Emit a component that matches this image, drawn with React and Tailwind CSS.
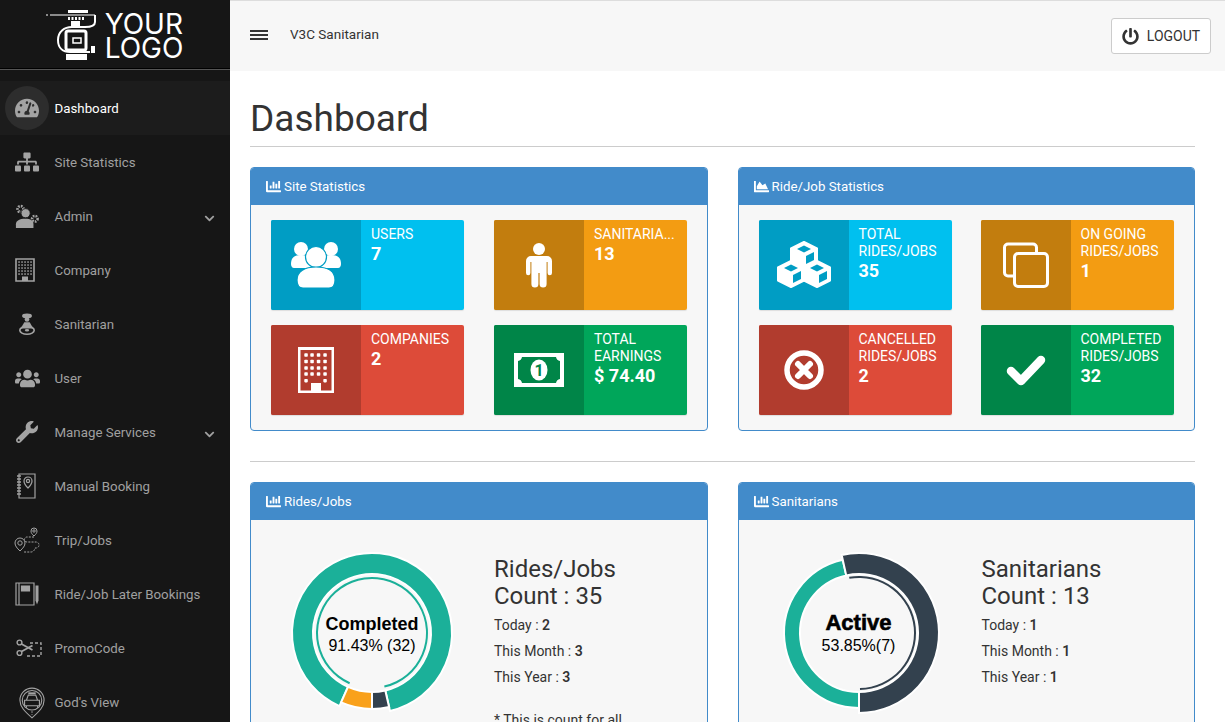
import {
  FaTachometerAlt, FaSitemap, FaUsers, FaWrench, FaChevronDown, FaChartBar, FaChartArea, FaPowerOff,
} from "react-icons/fa";

const FONT = "font-['Roboto',sans-serif]";

// ---- sidebar drawings ----

function AdminIcon() {
  return (
    <svg viewBox="0 0 26 26" className="w-[24px] h-[24px]" fill="currentColor">
      <circle cx="6" cy="5.500" r="3.200" fill="none" stroke="currentColor" strokeWidth="3" strokeDasharray="1.800 1.200" />
      <circle cx="21.500" cy="16" r="3" fill="none" stroke="currentColor" strokeWidth="2.800" strokeDasharray="1.800 1.100" />
      <circle cx="11.500" cy="10" r="5" stroke="#161616" strokeWidth="1" />
      <path d="M1 26v-4c0-4 4-6 10-6s9 2 9 6v4z" />
    </svg>
  );
}

function CompanyIcon() {
  return (
    <svg viewBox="0 0 20 24" className="w-[20px] h-[24px] -translate-x-[2px]" fill="currentColor">
      <path d="M1 1h18v22H1z" fill="none" stroke="currentColor" strokeWidth="1.600" />
      {[4, 7, 10, 13, 16].map((y) =>
        [4, 7, 10, 13, 16].map((x) => <rect key={`${x}-${y}`} x={x - 0.7} y={y - 0.7} width="1.500" height="1.500" />)
      )}
      <path d="M7 18.500h6V23H7z" />
    </svg>
  );
}

function SanitarianIcon() {
  return (
    <svg viewBox="0 0 20 24" className="w-[18px] h-[24px]" fill="currentColor">
      <ellipse cx="10" cy="3" rx="5.500" ry="2.600" />
      <circle cx="10" cy="7" r="2.600" />
      <path d="M7 10h6l4 7H3z" />
      <ellipse cx="10" cy="19" rx="8" ry="4.400" fill="none" stroke="currentColor" strokeWidth="1.800" />
      <ellipse cx="10" cy="19" rx="2.400" ry="1.400" />
    </svg>
  );
}

function BookingIcon() {
  return (
    <svg viewBox="0 0 20 26" className="w-[20px] h-[26px] -translate-x-[1px]" fill="none" stroke="currentColor" strokeWidth="1.200">
      <path d="M3 1h16v24H3z" />
      <path d="M1 3h4M1 6h4M1 9h4M1 12h4M1 15h4M1 18h4M1 21h4" strokeWidth="1.400" />
      <path d="M12 15c-3-3-4-5-4-7a4 4 0 0 1 8 0c0 2-1 4-4 7z" />
      <circle cx="12" cy="8" r="1.600" />
    </svg>
  );
}

function TripIcon() {
  return (
    <svg viewBox="0 0 26 26" className="w-[26px] h-[26px]" fill="none" stroke="currentColor" strokeWidth="1">
      <path d="M20 9c-2-2-3-3-3-5a3 3 0 0 1 6 0c0 2-1 3-3 5z" />
      <circle cx="20" cy="4" r="1.200" />
      <path d="M6 24c-3-3-5-5-5-8a5 5 0 0 1 10 0c0 3-2 5-5 8z" />
      <circle cx="6" cy="16" r="2.200" />
      <path d="M20 10h-7a2.500 2.500 0 0 0 0 5h9a3 3 0 0 1 0 6 h-1 q-1 4-4 4H9" strokeDasharray="2 1.200" />
    </svg>
  );
}

function LaterIcon() {
  return (
    <svg viewBox="0 0 24 24" className="w-[24px] h-[24px]" fill="none" stroke="currentColor" strokeWidth="1.200">
      <path d="M1 1h18v22H1zM4 1v22" />
      <path d="M6.500 4h8v5h-8z" fill="currentColor" />
      <path d="M20.500 3.500h3v15l-1.500 4-1.500-4z" fill="currentColor" stroke="none" />
    </svg>
  );
}

function PromoIcon() {
  return (
    <svg viewBox="0 0 27 18" className="w-[27px] h-[18px] translate-x-[2px]" fill="none" stroke="currentColor" strokeWidth="1.400">
      <circle cx="3.500" cy="3.500" r="2.400" />
      <circle cx="3.500" cy="14" r="2.400" />
      <path d="M5.500 5l11 6M5.500 12.500l11-6" strokeWidth="1.800" />
      <path d="M14 4h11v13H9" strokeDasharray="3 2" />
    </svg>
  );
}

function GodViewIcon() {
  return (
    <svg viewBox="0 0 28 34" className="w-[26px] h-[32px] translate-x-[5px] translate-y-[1px]" fill="none" stroke="currentColor" strokeWidth="1.200">
      <path d="M14 33C6 26 1 21 1 14a13 13 0 0 1 26 0c0 7-5 12-13 19z" />
      <circle cx="14" cy="14" r="10.500" />
      <path d="M10 5.500h8v2h-8z" fill="currentColor" stroke="none" />
      <path d="M8 14l2-5.500h8l2 5.500M6 14h16v6H6zM8 20v2M20 20v2" />
      <path d="M14 26v4" strokeDasharray="1.500 1.500" />
    </svg>
  );
}

const MENU = [
  { label: "Dashboard", icon: <FaTachometerAlt size={24} />, active: true },
  { label: "Site Statistics", icon: <FaSitemap size={24} /> },
  { label: "Admin", icon: <AdminIcon />, arrow: true },
  { label: "Company", icon: <CompanyIcon /> },
  { label: "Sanitarian", icon: <SanitarianIcon /> },
  { label: "User", icon: <FaUsers size={25} /> },
  { label: "Manage Services", icon: <FaWrench size={22} />, arrow: true },
  { label: "Manual Booking", icon: <BookingIcon /> },
  { label: "Trip/Jobs", icon: <TripIcon /> },
  { label: "Ride/Job Later Bookings", icon: <LaterIcon /> },
  { label: "PromoCode", icon: <PromoIcon /> },
  { label: "God's View", icon: <GodViewIcon /> },
];

function Logo() {
  return (
    <div className="h-[68px] flex items-center justify-center gap-[9px] pr-[1px]">
      <svg viewBox="0 0 50 51" className="w-[50px] h-[51px] text-white" fill="none" stroke="currentColor">
        <path d="M0 6h2M4 6h45" strokeWidth="1.200" />
        <path d="M22 1h20v3H22zM25 12h9v6h-9z" fill="currentColor" stroke="none" />
        <path d="M22 9.500h16" strokeWidth="3" strokeDasharray="2 1.500" />
        <path d="M49 6v7c0 4-4 5-10 5H26c-8 0-14 5-14 13 0 8 5 12 12 12h20" strokeWidth="2" />
        <rect x="20" y="22" width="20" height="19" rx="2" strokeWidth="3" />
        <path d="M27 29h8v5h-8z" strokeWidth="1.500" />
        <path d="M20 45h21v6H20zM45 37h4v7h-4z" fill="currentColor" stroke="none" />
      </svg>
      <div className="font-['Inter',sans-serif] text-white text-[28px] leading-[24px] font-normal mt-[3px]">
        YOUR
        <br />
        LOGO
      </div>
    </div>
  );
}

function Sidebar() {
  return (
    <aside className="w-[230px] shrink-0 h-full bg-[#161616] text-[#a0a0a0] overflow-hidden">
      <Logo />
      <div className="h-[2px] bg-black border-b border-[#555]" />
      <nav className="mt-[11px]">
        {MENU.map((m) => (
          <div key={m.label} className={`h-[54px] flex items-center ${m.active ? "bg-[#1c1c1c] text-white" : ""}`}>
            <div
              className={`w-[44px] h-[44px] ml-[5px] rounded-full flex items-center justify-center text-[#a3a3a3] ${
                m.active ? "bg-[#2d2d2d]" : ""
              }`}
            >
              {m.icon}
            </div>
            <span className="ml-[5.500px] mt-[2px] text-[13.300px] flex-1 whitespace-nowrap">{m.label}</span>
            {m.arrow && <FaChevronDown size={11} className="mr-[15px] mt-[4px]" />}
          </div>
        ))}
      </nav>
    </aside>
  );
}

// ---- tile drawings ----

function UsersGroup() {
  return (
    <svg viewBox="0 0 50 46" className="w-[50px] h-[46px]" fill="white" stroke="#009dc4" strokeWidth="1.200">
      <circle cx="10" cy="7" r="7" stroke="none" />
      <circle cx="40" cy="7" r="7" stroke="none" />
      <path d="M0 22c0-6 3-9 10-9s10 3 10 9v4H3c-2 0-3-2-3-4z" stroke="none" />
      <path d="M50 22c0-6-3-9-10-9s-10 3-10 9v4h17c2 0 3-2 3-4z" stroke="none" />
      <circle cx="25" cy="15" r="10.500" />
      <path d="M6 38c0-9 8-13 19-13s19 4 19 13c0 5-2 8-6 8H12c-4 0-6-3-6-8z" />
    </svg>
  );
}

function PersonIcon() {
  return (
    <svg viewBox="0 0 26 45" className="w-[26px] h-[45px]" fill="white">
      <circle cx="13" cy="6" r="6" />
      <path d="M5 13h16a5 5 0 0 1 5 5v12a2.200 2.200 0 0 1-4.400 0V19h-1v22a3.500 3.500 0 0 1-7 0V30h-1.200v11a3.500 3.500 0 0 1-7 0V19h-1v11a2.200 2.200 0 0 1-4.400 0V18a5 5 0 0 1 5-5z" />
    </svg>
  );
}

function BuildingIcon() {
  return (
    <svg viewBox="0 0 36 46" className="w-[36px] h-[46px]">
      <path d="M0 0h36v46H0z" fill="white" />
      <path d="M2.500 3h31v40.500h-31z" fill="#b13c2e" />
      {[8, 14.500, 21, 27].map((y) =>
        [8, 14, 20.500, 27].map((x) => <rect key={`${x}-${y}`} x={x - 1.7} y={y - 1.7} width="3.500" height="3.400" rx="0.800" fill="white" />)
      )}
      <rect x="6.300" y="32" width="3.500" height="3.400" rx="0.800" fill="white" />
      <rect x="25.300" y="32" width="3.500" height="3.400" rx="0.800" fill="white" />
      <path d="M13 36h10v8H13z" fill="white" />
    </svg>
  );
}

function BillIcon() {
  return (
    <svg viewBox="0 0 50 34" className="w-[50px] h-[34px]">
      <path d="M0 0h50v34H0z" fill="white" />
      <path d="M8 4h34a5 5 0 0 0 4 4v18a5 5 0 0 0-4 4H8a5 5 0 0 0-4-4V8a5 5 0 0 0 4-4z" fill="#008548" />
      <ellipse cx="25" cy="17" rx="8.500" ry="10.500" fill="white" />
      <text x="25" y="23" textAnchor="middle" fontSize="16" fontWeight="700" fontFamily="Roboto, sans-serif" fill="#008548">
        1
      </text>
    </svg>
  );
}

function Cube({ x, y }) {
  return (
    <g>
      <path
        d={`M${x} ${y - 13}l13 6.500v13L${x} ${y + 13}l-13-6.500v-13z`}
        fill="white"
        stroke="white"
        strokeWidth="2"
        strokeLinejoin="round"
      />
      <path d={`M${x} ${y - 9.5}l7 3.500-7 3.500-7-3.500z`} fill="#009dc4" />
      <path d={`M${x + 2} ${y + 1}l8-4v8l-8 4z`} fill="#009dc4" />
    </g>
  );
}

function CubesIcon() {
  return (
    <svg viewBox="0 0 56 48" className="w-[56px] h-[48px]">
      <Cube x={28} y={14} />
      <Cube x={15} y={33} />
      <Cube x={41} y={33} />
    </svg>
  );
}

function CloneIcon() {
  return (
    <svg viewBox="0 0 46 46" className="w-[46px] h-[46px]" fill="none" stroke="white" strokeWidth="3">
      <path d="M10 34H5a3.500 3.500 0 0 1-3.500-3.500v-25A3.500 3.500 0 0 1 5 2h25a3.500 3.500 0 0 1 3.500 3.500V10" />
      <rect x="11.500" y="11.500" width="33" height="33" rx="3.500" />
    </svg>
  );
}

function CancelIcon() {
  return (
    <svg viewBox="0 0 40 40" className="w-[40px] h-[40px]">
      <circle cx="20" cy="20" r="17" fill="none" stroke="white" strokeWidth="5.500" />
      <path d="M14 14l12 12M26 14L14 26" stroke="white" strokeWidth="6" strokeLinecap="round" />
    </svg>
  );
}

function CheckIcon() {
  return (
    <svg viewBox="0 0 40 31" className="w-[40px] h-[31px]" fill="none" stroke="white" strokeWidth="8.500" strokeLinecap="round" strokeLinejoin="round">
      <path d="M5 16l10 10L35 5" />
    </svg>
  );
}

const TILES_SITE = [
  { label: "USERS", value: "7", color: "cyan", icon: <UsersGroup /> },
  { label: "SANITARIA...", value: "13", color: "orange", icon: <PersonIcon /> },
  { label: "COMPANIES", value: "2", color: "red", icon: <BuildingIcon /> },
  { label: "TOTAL EARNINGS", value: "$ 74.40", color: "green", icon: <BillIcon /> },
];

const TILES_RIDES = [
  { label: "TOTAL RIDES/JOBS", value: "35", color: "cyan", icon: <CubesIcon /> },
  { label: "ON GOING RIDES/JOBS", value: "1", color: "orange", icon: <CloneIcon /> },
  { label: "CANCELLED RIDES/JOBS", value: "2", color: "red", icon: <CancelIcon /> },
  { label: "COMPLETED RIDES/JOBS", value: "32", color: "green", icon: <CheckIcon /> },
];

const TILE_COLORS = {
  cyan: ["bg-[#00c0ef]", "bg-[#009dc4]"],
  orange: ["bg-[#f39c12]", "bg-[#c27d0e]"],
  red: ["bg-[#dd4b39]", "bg-[#b13c2e]"],
  green: ["bg-[#00a65a]", "bg-[#008548]"],
};

function Tile({ label, value, color, icon }) {
  const [bg, dark] = TILE_COLORS[color];
  return (
    <div className={`h-[90px] flex rounded-[2px] overflow-hidden text-white shadow-[0_1px_1px_rgba(0,0,0,0.1)] ${bg}`}>
      <div className={`w-[90px] shrink-0 flex items-center justify-center ${dark}`}>{icon}</div>
      <div className="px-[10px] pt-[6px]">
        <div className="text-[14px] leading-[17px]">{label}</div>
        <div className="text-[18px] font-bold leading-[20px] mt-[1px]">{value}</div>
      </div>
    </div>
  );
}

function Panel({ icon, title, children }) {
  return (
    <section className="border border-[#428bca] rounded-[4px] bg-[#f7f7f7] overflow-hidden">
      <div className="h-[37px] bg-[#428bca] text-white text-[13.300px] flex items-center gap-[3px] px-[15px]">
        {icon}
        <span>{title}</span>
      </div>
      {children}
    </section>
  );
}

function TileGrid({ tiles, gap = "gap-x-[30px]" }) {
  return (
    <div className={`grid grid-cols-[193px_193px] gap-y-[15px] px-[20px] py-[15px] ${gap}`}>
      {tiles.map((t) => (
        <Tile key={t.label} {...t} />
      ))}
    </div>
  );
}

// ---- donut ----

function arc(cx, cy, r0, r1, a0, a1) {
  const pt = (r, a) => {
    const t = ((a - 90) * Math.PI) / 180;
    return `${(cx + r * Math.cos(t)).toFixed(2)} ${(cy + r * Math.sin(t)).toFixed(2)}`;
  };
  const large = a1 - a0 > 180 ? 1 : 0;
  return `M${pt(r1, a0)}A${r1} ${r1} 0 ${large} 1 ${pt(r1, a1)}L${pt(r0, a1)}A${r0} ${r0} 0 ${large} 0 ${pt(r0, a0)}Z`;
}

function Donut({ segments, ring, title, sub, titleClass, offset }) {
  return (
    <div className={`relative w-[180px] h-[180px] ${offset}`}>
      <svg viewBox="0 0 180 180" className="w-[180px] h-[180px]">
        {segments.map((s) => (
          <path key={s.color} d={arc(90, 90, 59, s.r, s.from, s.to)} fill={s.color} stroke="white" strokeWidth="2" />
        ))}
        <path d={arc(90, 90, ring.r - 1, ring.r + 1, ring.from, ring.to)} fill={ring.color} />
      </svg>
      <div className="absolute inset-0 flex flex-col items-center justify-center font-['Liberation_Sans',sans-serif] text-black">
        <div className={titleClass}>{title}</div>
        <div className="text-[16px] leading-[21px]">{sub}</div>
      </div>
    </div>
  );
}

function Counts({ title, count, today, month, year, note }) {
  return (
    <div className="pt-[13px] text-[#333]">
      <div className="text-[24px] leading-[27px]">{title}</div>
      <div className="text-[24px] leading-[27px]">Count : {count}</div>
      <div className="mt-[2px] text-[14px] leading-[26px]">
        <div>
          Today : <b className="font-semibold">{today}</b>
        </div>
        <div>
          This Month : <b className="font-semibold">{month}</b>
        </div>
        <div>
          This Year : <b className="font-semibold">{year}</b>
        </div>
      </div>
      {note && <p className="mt-[20px] text-[14px] leading-[20px] w-[150px]">{note}</p>}
    </div>
  );
}

function BarIcon() {
  return <FaChartBar size={15} />;
}

export default function App() {
  return (
    <div className={`flex h-screen overflow-hidden bg-white ${FONT}`}>
      <Sidebar />
      <div className="flex-1 min-w-0">
        <header className="h-[71px] bg-[#f7f7f7] border-t border-[#ddd] flex items-center pl-[20px] pr-[14px] text-[#333]">
          <div className="w-[18px] h-[10px] flex flex-col justify-between mt-[-3px]">
            <span className="h-[2px] bg-[#333]" />
            <span className="h-[2px] bg-[#333]" />
            <span className="h-[2px] bg-[#333]" />
          </div>
          <span className="ml-[22px] text-[13.500px] mt-[-4px]">V3C Sanitarian</span>
          <button className="ml-auto h-[36px] w-[100px] bg-white border border-[#ccc] rounded-[3px] flex items-center justify-center gap-[8px] text-[14px]">
            <FaPowerOff size={17} />
            LOGOUT
          </button>
        </header>
        <main className="pl-[20px] pr-[30px]">
          <h1 className="text-[37px] leading-[40px] text-[#333] pt-[28px] pb-[7px] border-b border-[#ccc] font-normal">
            Dashboard
          </h1>
          <div className="grid grid-cols-2 gap-x-[30px] mt-[20px]">
            <Panel icon={<BarIcon />} title="Site Statistics">
              <TileGrid tiles={TILES_SITE} />
            </Panel>
            <Panel icon={<FaChartArea size={15} />} title="Ride/Job Statistics">
              <TileGrid tiles={TILES_RIDES} gap="gap-x-[29px]" />
            </Panel>
          </div>
          <hr className="mt-[30px] mb-[20px] border-[#ccc]" />
          <div className="grid grid-cols-2 gap-x-[30px]">
            <Panel icon={<BarIcon />} title="Rides/Jobs">
              <div className="grid grid-cols-[193px_193px] gap-x-[30px] px-[20px] pt-[23px]">
                <Donut
                  offset="ml-[11px]"
                  title="Completed"
                  titleClass="text-[18px] leading-[22px] font-bold mt-[2px]"
                  sub="91.43% (32)"
                  segments={[
                    { color: "#1bb099", r: 80, from: -156, to: 167 },
                    { color: "#33414e", r: 76, from: 167, to: 180 },
                    { color: "#f9a11b", r: 76, from: 180, to: 204 },
                  ]}
                  ring={{ color: "#1bb099", r: 55, from: -156, to: 167 }}
                />
                <Counts title="Rides/Jobs" count="35" today="2" month="3" year="3" note="* This is count for all Rides/Jobs" />
              </div>
            </Panel>
            <Panel icon={<BarIcon />} title="Sanitarians">
              <div className="grid grid-cols-[193px_193px] gap-x-[30px] px-[20px] pt-[23px]">
                <Donut
                  offset="ml-[10px]"
                  title="Active"
                  titleClass="text-[22px] leading-[24px] font-bold [-webkit-text-stroke:0.6px_black]"
                  sub="53.85%(7)"
                  segments={[
                    { color: "#1bb099", r: 75, from: 180, to: 347.5 },
                    { color: "#33414e", r: 80, from: -12.5, to: 180 },
                  ]}
                  ring={{ color: "#33414e", r: 56, from: -10, to: 179 }}
                />
                <Counts title="Sanitarians" count="13" today="1" month="1" year="1" />
              </div>
            </Panel>
          </div>
        </main>
      </div>
    </div>
  );
}
